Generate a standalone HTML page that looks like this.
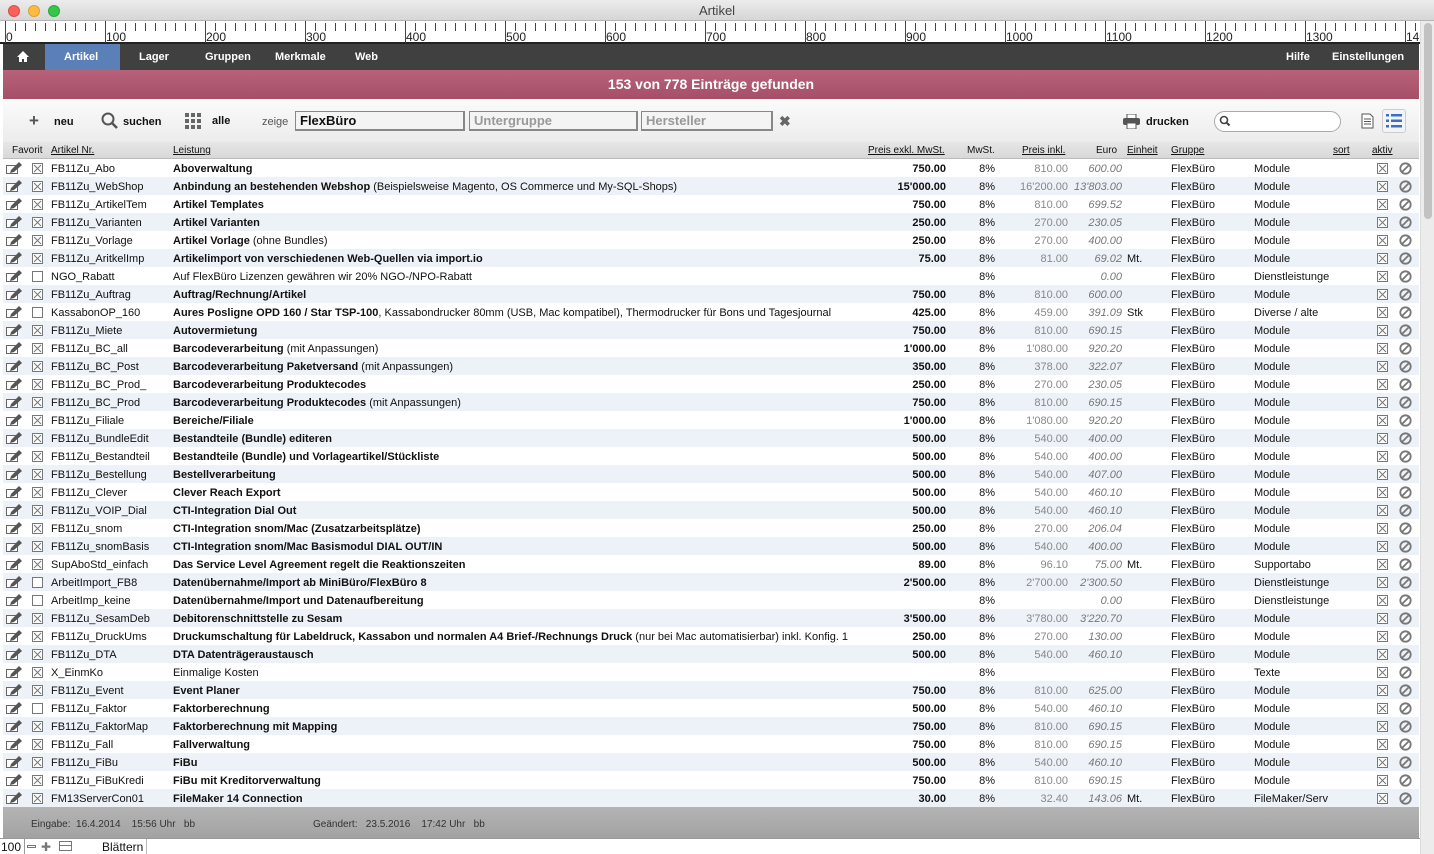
<!DOCTYPE html>
<html><head><meta charset="utf-8"><style>
*{margin:0;padding:0;box-sizing:border-box}
body{width:1434px;height:854px;overflow:hidden;background:#fff;font-family:"Liberation Sans",Arial,sans-serif;font-size:11px;color:#111;position:relative}
.a{position:absolute;white-space:nowrap}
#title{left:0;top:0;width:1434px;height:21px;background:linear-gradient(#ececec,#d6d6d6);border-bottom:1px solid #b5b5b5;text-align:center;font-size:13px;line-height:21px;color:#444}
.dot{position:absolute;top:5px;width:12px;height:12px;border-radius:50%}
#ruler{left:0;top:21px;width:1420px;height:23px;background:#fff;border-bottom:2px solid #222}
#nav{left:3px;top:44px;width:1416px;height:26px;background:#404040;color:#fff;font-weight:bold;font-size:11px}
#nav span{position:absolute;top:7px}
#pink{left:3px;top:70px;width:1416px;height:29px;background:linear-gradient(#b7627a,#a64f68);color:#fff;font-weight:bold;font-size:14px;text-align:center;line-height:29px}
#tool{left:3px;top:99px;width:1416px;height:43px;background:linear-gradient(#fbfbfb,#ececec)}
.b{font-weight:bold}
.fld{position:absolute;top:111px;height:20px;border:1px solid #888;border-right-width:2px;border-bottom-width:2px;background:#f4f4f4;font-size:13px;font-weight:bold;padding:1px 4px}
#hdr{left:3px;top:142px;width:1416px;height:17px;background:linear-gradient(#e6e6e6,#d8d8d8);border-bottom:1px solid #bbb;font-size:10px}
#hdr span{position:absolute;top:3px}
.u{text-decoration:underline}
.row{position:absolute;left:3px;width:1416px;height:18px;font-size:11px}
.row span{position:absolute;top:4px;white-space:nowrap}
.r{text-align:right}
.g{color:#888}
.i{font-style:italic;color:#777}
#foot{left:3px;top:807px;width:1416px;height:31px;background:linear-gradient(#b4b4b4,#a2a2a2);font-size:10px;color:#333}
#bot{left:0;top:838px;width:1434px;height:16px;background:#fff;border-top:1px solid #999;font-size:12px}
#sb{left:1420px;top:21px;width:14px;height:833px;background:#ececec;border-left:1px solid #ddd}
</style></head><body>
<div id="title" class="a">Artikel
<div class="dot" style="left:8px;background:#fc605c;border:1px solid #de4c46"></div>
<div class="dot" style="left:28px;background:#fdbc40;border:1px solid #dea033"></div>
<div class="dot" style="left:48px;background:#34c84a;border:1px solid #27aa35"></div>
</div>
<div id="ruler" class="a"></div>
<div id="nav" class="a">
<svg style="position:absolute;left:13px;top:6px" width="14" height="13" viewBox="0 0 14 13"><path d="M7 1L1 7h2v5h3V9h2v3h3V7h2z" fill="#fff"/></svg>
<div style="position:absolute;left:42px;top:0;width:75px;height:26px;background:#5b7fb7"></div>
<span style="left:61px">Artikel</span><span style="left:136px">Lager</span><span style="left:202px">Gruppen</span><span style="left:272px">Merkmale</span><span style="left:352px">Web</span>
<span style="left:1283px">Hilfe</span><span style="left:1329px">Einstellungen</span>
</div>
<div id="pink" class="a">153 von 778 Einträge gefunden</div>
<div id="tool" class="a"></div>
<div class="a b" style="left:29px;top:111px;font-size:17px;color:#555">+</div>
<div class="a b" style="left:54px;top:116px">neu</div>
<svg class="a" style="left:101px;top:112px" width="18" height="18" viewBox="0 0 18 18"><circle cx="7" cy="7" r="5.5" fill="none" stroke="#555" stroke-width="2"/><path d="M11 11l5 5" stroke="#555" stroke-width="2.5"/></svg>
<div class="a b" style="left:123px;top:116px">suchen</div>
<svg class="a" style="left:185px;top:113px" width="16" height="16" viewBox="0 0 16 16" fill="#666"><rect x="0" y="0" width="4" height="4"/><rect x="6" y="0" width="4" height="4"/><rect x="12" y="0" width="4" height="4"/><rect x="0" y="6" width="4" height="4"/><rect x="6" y="6" width="4" height="4"/><rect x="12" y="6" width="4" height="4"/><rect x="0" y="12" width="4" height="4"/><rect x="6" y="12" width="4" height="4"/><rect x="12" y="12" width="4" height="4"/></svg>
<div class="a b" style="left:212px;top:115px">alle</div>
<div class="a" style="left:262px;top:116px;color:#555">zeige</div>
<div class="fld" style="left:295px;width:170px">FlexBüro</div>
<div class="fld" style="left:469px;width:169px;color:#999">Untergruppe</div>
<div class="fld" style="left:641px;width:132px;color:#999">Hersteller</div>
<div class="a b" style="left:779px;top:113px;font-size:14px;color:#666">✖</div>
<svg class="a" style="left:1123px;top:114px" width="17" height="15" viewBox="0 0 17 15"><rect x="4" y="0" width="9" height="5" fill="#fff" stroke="#555"/><rect x="0" y="4" width="17" height="7" rx="2" fill="#555"/><rect x="4" y="9" width="9" height="6" fill="#fff" stroke="#555"/></svg>
<div class="a b" style="left:1146px;top:116px">drucken</div>
<div class="a" style="left:1214px;top:111px;width:127px;height:21px;border:1px solid #aaa;border-radius:11px;background:#fff"></div>
<svg class="a" style="left:1219px;top:115px" width="12" height="12" viewBox="0 0 12 12"><circle cx="5" cy="5" r="3.5" fill="none" stroke="#444" stroke-width="1.6"/><path d="M7.5 7.5l3 3" stroke="#444" stroke-width="2"/></svg>
<svg class="a" style="left:1361px;top:113px" width="13" height="16" viewBox="0 0 13 16"><path d="M1 1h8l3 3v11H1z" fill="#fff" stroke="#555"/><path d="M3 6h7M3 8.5h7M3 11h7" stroke="#555"/></svg>
<div class="a" style="left:1382px;top:109px;width:24px;height:24px;border:1px solid #ccc;border-radius:3px;background:#f2f4f8"></div>
<svg class="a" style="left:1386px;top:114px" width="16" height="14" viewBox="0 0 16 14" fill="#3b6fc4"><rect x="0" y="0" width="3" height="2.5"/><rect x="5" y="0" width="11" height="2.5"/><rect x="0" y="5.5" width="3" height="2.5"/><rect x="5" y="5.5" width="11" height="2.5"/><rect x="0" y="11" width="3" height="2.5"/><rect x="5" y="11" width="11" height="2.5"/></svg>
<div id="hdr" class="a">
<span style="left:9px">Favorit</span><span class="u" style="left:48px">Artikel Nr.</span><span class="u" style="left:170px">Leistung</span>
<span class="u" style="left:865px">Preis exkl. MwSt.</span><span style="left:964px">MwSt.</span><span class="u" style="left:1019px">Preis inkl.</span>
<span style="left:1093px">Euro</span><span class="u" style="left:1124px">Einheit</span><span class="u" style="left:1168px">Gruppe</span>
<span class="u" style="left:1330px">sort</span><span class="u" style="left:1369px">aktiv</span>
</div>
<div id="rows"></div>
<div id="foot" class="a">
<span class="a" style="left:28px;top:12px">Eingabe:&nbsp;&nbsp;16.4.2014&nbsp;&nbsp;&nbsp;&nbsp;15:56 Uhr&nbsp;&nbsp;&nbsp;bb</span>
<span class="a" style="left:310px;top:12px">Geändert:&nbsp;&nbsp;&nbsp;23.5.2016&nbsp;&nbsp;&nbsp;&nbsp;17:42 Uhr&nbsp;&nbsp;&nbsp;bb</span>
</div>
<div id="bot" class="a">
<span class="a" style="left:1px;top:1px">100</span>
<span class="a" style="left:24px;top:0;width:1px;height:15px;background:#999"></span>
<span class="a" style="left:27px;top:6px;width:9px;height:3px;border:1px solid #777"></span>
<span class="a" style="left:41px;top:1px;color:#777">✚</span>
<span class="a" style="left:59px;top:2px;width:13px;height:10px;border:1px solid #777"></span>
<span class="a" style="left:60px;top:6px;width:11px;height:1px;background:#777"></span>
<span class="a" style="left:102px;top:1px">Blättern</span>
<span class="a" style="left:146px;top:0;width:1px;height:15px;background:#bbb"></span>
</div>
<div id="sb" class="a"><div style="position:absolute;left:3px;top:2px;width:8px;height:196px;border-radius:4px;background:#c2c2c2"></div></div>
<script>
var r=document.getElementById('ruler'),h='';
for(var x=5;x<=1418;x+=10){var big=(x-5)%100==0;h+='<div style="position:absolute;left:'+x+'px;top:'+(big?0:2)+'px;width:1px;height:'+(big?22:8)+'px;background:#444"></div>';if(big)h+='<div style="position:absolute;left:'+(x+1)+'px;top:9px;font-size:12px;color:#222">'+(x-5)+'</div>';}
r.innerHTML=h;
var D=[
["FB11Zu_Abo","Aboverwaltung","","750.00","810.00","600.00","",1,"Module"],
["FB11Zu_WebShop","Anbindung an bestehenden Webshop"," (Beispielsweise Magento, OS Commerce und My-SQL-Shops)","15'000.00","16'200.00","13'803.00","",1,"Module"],
["FB11Zu_ArtikelTem","Artikel Templates","","750.00","810.00","699.52","",1,"Module"],
["FB11Zu_Varianten","Artikel Varianten","","250.00","270.00","230.05","",1,"Module"],
["FB11Zu_Vorlage","Artikel Vorlage"," (ohne Bundles)","250.00","270.00","400.00","",1,"Module"],
["FB11Zu_AritkelImp","Artikelimport von verschiedenen Web-Quellen via import.io","","75.00","81.00","69.02","Mt.",1,"Module"],
["NGO_Rabatt","","Auf FlexBüro Lizenzen gewähren wir 20% NGO-/NPO-Rabatt","","","0.00","",0,"Dienstleistunge"],
["FB11Zu_Auftrag","Auftrag/Rechnung/Artikel","","750.00","810.00","600.00","",1,"Module"],
["KassabonOP_160","Aures Posligne OPD 160 / Star TSP-100",", Kassabondrucker 80mm (USB, Mac kompatibel), Thermodrucker für Bons und Tagesjournal","425.00","459.00","391.09","Stk",0,"Diverse / alte"],
["FB11Zu_Miete","Autovermietung","","750.00","810.00","690.15","",1,"Module"],
["FB11Zu_BC_all","Barcodeverarbeitung"," (mit Anpassungen)","1'000.00","1'080.00","920.20","",1,"Module"],
["FB11Zu_BC_Post","Barcodeverarbeitung Paketversand"," (mit Anpassungen)","350.00","378.00","322.07","",1,"Module"],
["FB11Zu_BC_Prod_","Barcodeverarbeitung Produktecodes","","250.00","270.00","230.05","",1,"Module"],
["FB11Zu_BC_Prod","Barcodeverarbeitung Produktecodes"," (mit Anpassungen)","750.00","810.00","690.15","",1,"Module"],
["FB11Zu_Filiale","Bereiche/Filiale","","1'000.00","1'080.00","920.20","",1,"Module"],
["FB11Zu_BundleEdit","Bestandteile (Bundle) editeren","","500.00","540.00","400.00","",1,"Module"],
["FB11Zu_Bestandteil","Bestandteile (Bundle) und Vorlageartikel/Stückliste","","500.00","540.00","400.00","",1,"Module"],
["FB11Zu_Bestellung","Bestellverarbeitung","","500.00","540.00","407.00","",1,"Module"],
["FB11Zu_Clever","Clever Reach Export","","500.00","540.00","460.10","",1,"Module"],
["FB11Zu_VOIP_Dial","CTI-Integration Dial Out","","500.00","540.00","460.10","",1,"Module"],
["FB11Zu_snom","CTI-Integration snom/Mac (Zusatzarbeitsplätze)","","250.00","270.00","206.04","",1,"Module"],
["FB11Zu_snomBasis","CTI-Integration snom/Mac Basismodul DIAL OUT/IN","","500.00","540.00","400.00","",1,"Module"],
["SupAboStd_einfach","Das Service Level Agreement regelt die Reaktionszeiten","","89.00","96.10","75.00","Mt.",1,"Supportabo"],
["ArbeitImport_FB8","Datenübernahme/Import ab MiniBüro/FlexBüro 8","","2'500.00","2'700.00","2'300.50","",0,"Dienstleistunge"],
["ArbeitImp_keine","Datenübernahme/Import und Datenaufbereitung","","","","0.00","",0,"Dienstleistunge"],
["FB11Zu_SesamDeb","Debitorenschnittstelle zu Sesam","","3'500.00","3'780.00","3'220.70","",1,"Module"],
["FB11Zu_DruckUms","Druckumschaltung für Labeldruck, Kassabon und normalen A4 Brief-/Rechnungs Druck"," (nur bei Mac automatisierbar) inkl. Konfig. 1","250.00","270.00","130.00","",1,"Module"],
["FB11Zu_DTA","DTA Datenträgeraustausch","","500.00","540.00","460.10","",1,"Module"],
["X_EinmKo","","Einmalige Kosten","","","","",1,"Texte"],
["FB11Zu_Event","Event Planer","","750.00","810.00","625.00","",1,"Module"],
["FB11Zu_Faktor","Faktorberechnung","","500.00","540.00","460.10","",0,"Module"],
["FB11Zu_FaktorMap","Faktorberechnung mit Mapping","","750.00","810.00","690.15","",1,"Module"],
["FB11Zu_Fall","Fallverwaltung","","750.00","810.00","690.15","",1,"Module"],
["FB11Zu_FiBu","FiBu","","500.00","540.00","460.10","",1,"Module"],
["FB11Zu_FiBuKredi","FiBu mit Kreditorverwaltung","","750.00","810.00","690.15","",1,"Module"],
["FM13ServerCon01","FileMaker 14 Connection","","30.00","32.40","143.06","Mt.",1,"FileMaker/Serv"]];
var fav='<svg style="position:absolute;left:3px;top:2px" width="17" height="13" viewBox="0 0 17 13"><rect x="0.5" y="4.5" width="11" height="8" fill="#fff" stroke="#666"/><path d="M5 9l8-8 3 3-8 7-4 1z" fill="#555"/></svg>';
var xb='<svg style="position:absolute;left:LPX;top:4px" width="11" height="11" viewBox="0 0 11 11"><rect x="0.5" y="0.5" width="10" height="10" fill="#fff" stroke="#777"/>XX</svg>';
var xx='<path d="M2 2l7 7M9 2l-7 7" stroke="#777"/>';
var no='<svg style="position:absolute;left:1396px;top:3px" width="13" height="13" viewBox="0 0 13 13"><circle cx="6.5" cy="6.5" r="5.2" fill="none" stroke="#777" stroke-width="1.8"/><path d="M3 10L10 3" stroke="#777" stroke-width="1.8"/></svg>';
var o='';
D.forEach(function(d,i){
var y=159+i*18;
o+='<div class="row" style="top:'+y+'px;background:'+(i%2?'#edf1f8':'#fff')+'">'+fav+xb.replace('LPX','29px').replace('XX',d[7]?xx:'')+
'<span style="left:48px">'+d[0]+'</span>'+
'<span style="left:170px"><b>'+d[1]+'</b>'+d[2]+'</span>'+
'<span class="r b" style="left:843px;width:100px">'+d[3]+'</span>'+
'<span class="r" style="left:942px;width:50px">8%</span>'+
'<span class="r g" style="left:985px;width:80px">'+d[4]+'</span>'+
'<span class="r i" style="left:1039px;width:80px">'+d[5]+'</span>'+
'<span style="left:1124px">'+d[6]+'</span>'+
'<span style="left:1168px">FlexBüro</span>'+
'<span style="left:1251px">'+d[8]+'</span>'+
xb.replace('LPX','1374px').replace('XX',xx)+no+'</div>';
});
document.getElementById('rows').innerHTML=o;
</script>
</body></html>
